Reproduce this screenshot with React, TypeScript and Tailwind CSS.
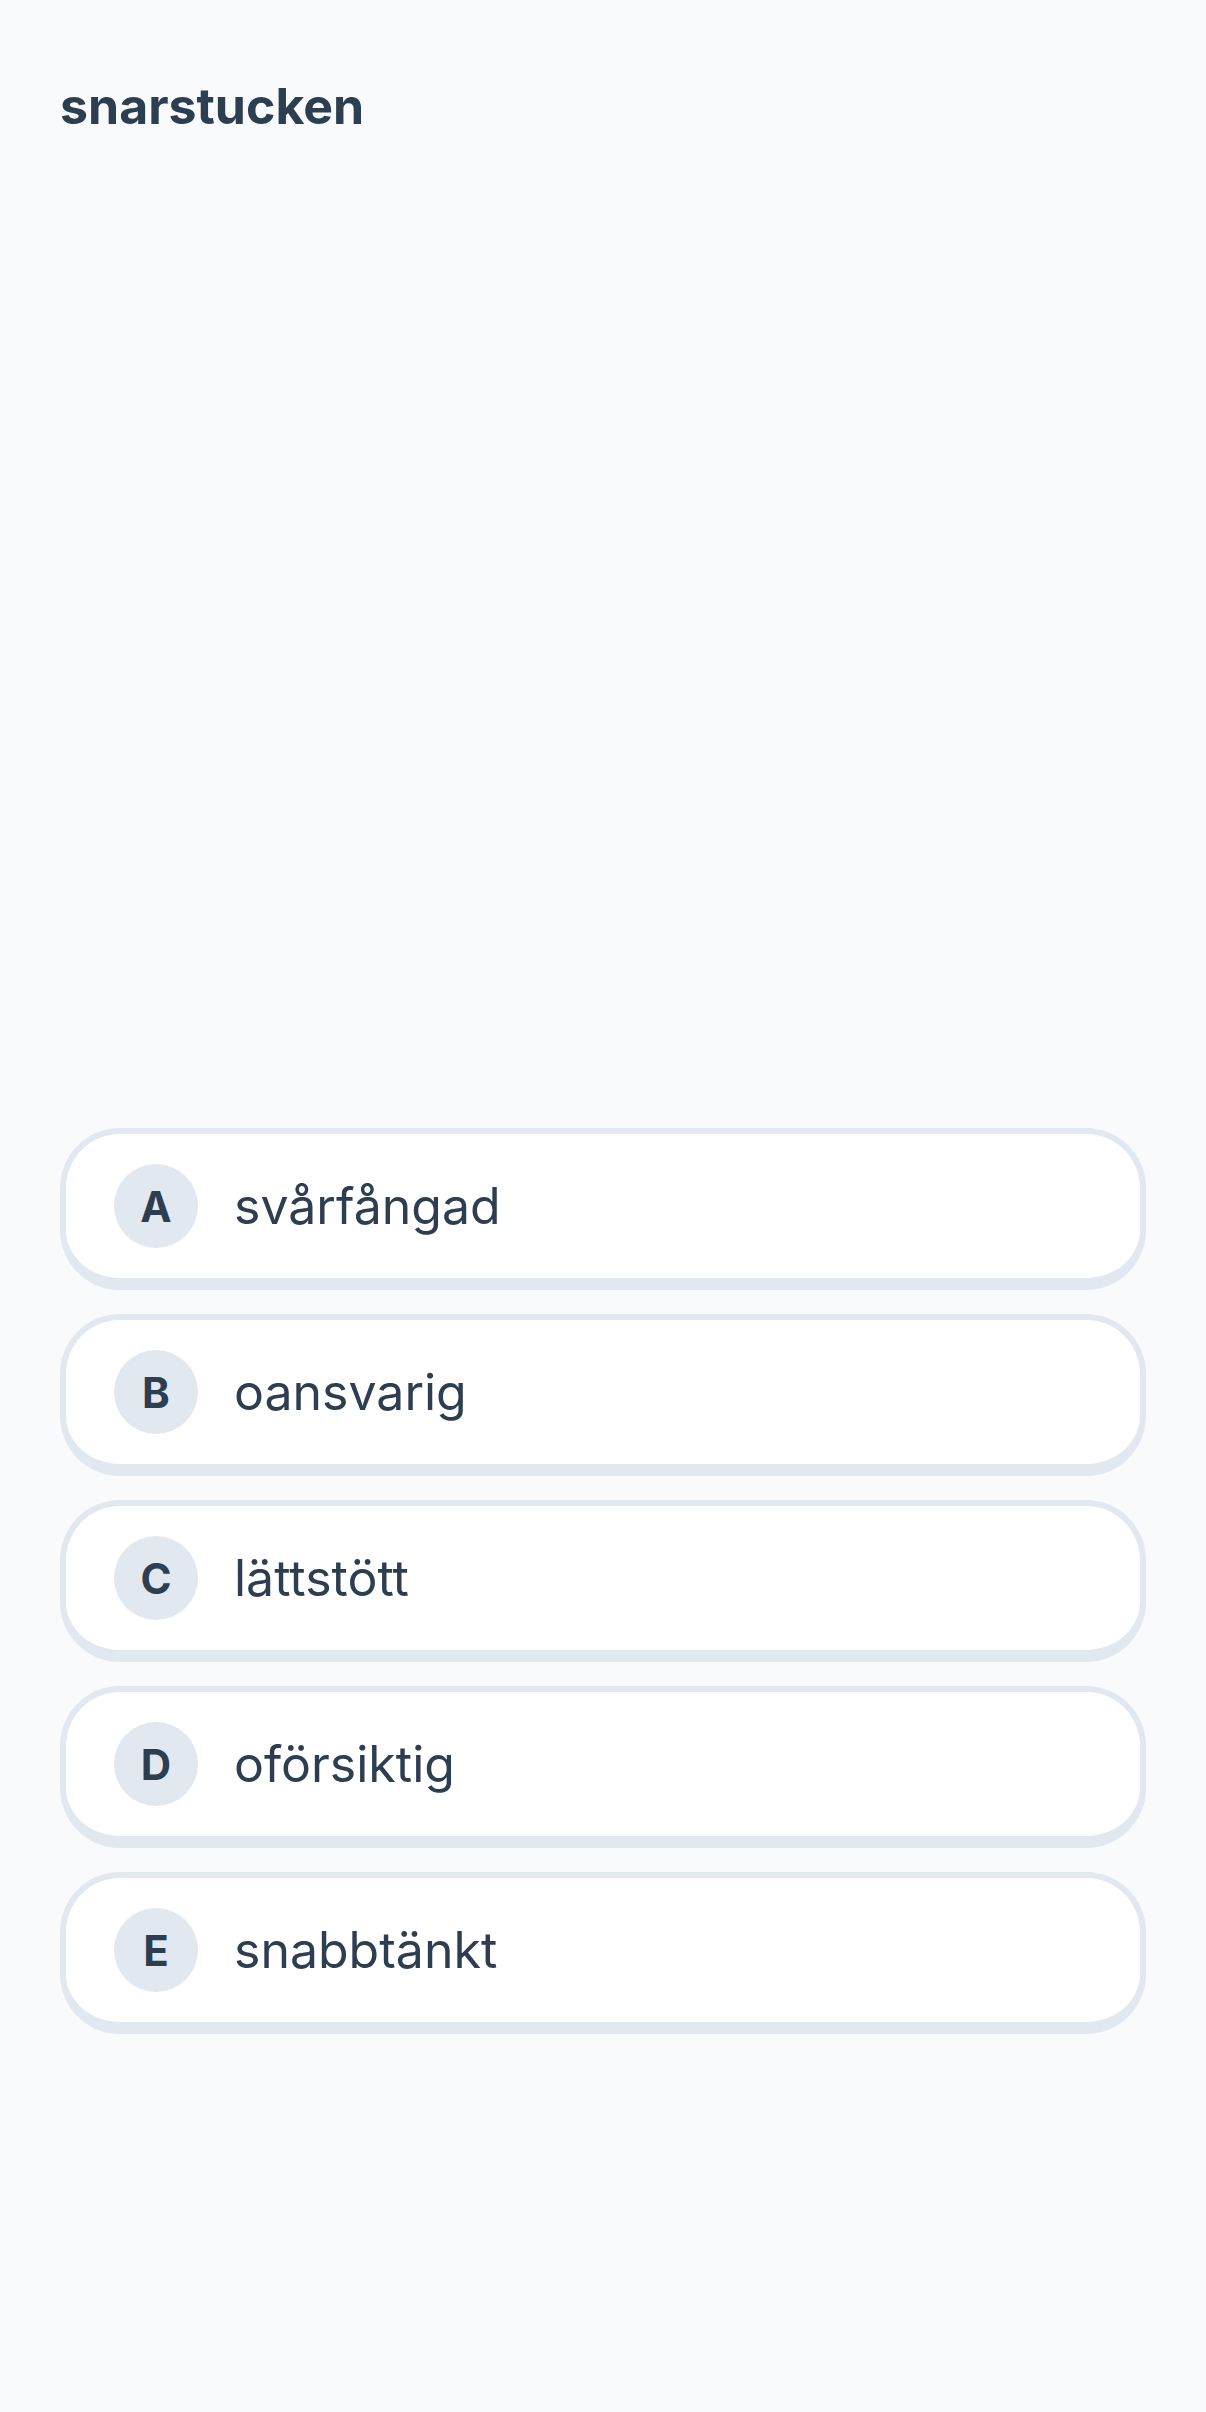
const OPTIONS = [
  { key: "A", label: "svårfångad" },
  { key: "B", label: "oansvarig" },
  { key: "C", label: "lättstött" },
  { key: "D", label: "oförsiktig" },
  { key: "E", label: "snabbtänkt" },
];

function OptionCard({ letter, label }: { letter: string; label: string }) {
  return (
    <button className="flex h-[162px] w-full items-center rounded-[60px] border-[6px] border-b-[12px] border-[#e2e8f0] bg-white px-[48px] text-left">
      <span className="flex h-[84px] w-[84px] shrink-0 items-center justify-center rounded-full bg-[#e2e8f0] text-[42px] font-bold text-[#2c3e50]">
        {letter}
      </span>
      <span className="ml-[36px] text-[50px] text-[#2c3e50]">{label}</span>
    </button>
  );
}

export default function App() {
  return (
    <div
      className="flex min-h-screen w-full flex-col bg-[#f8fafc] px-[60px] [font-variant-ligatures:none]"
      style={{ fontFamily: "Inter, Lato, sans-serif" }}
    >
      <header className="pt-[76px]">
        <h1 className="text-[50px] font-bold leading-[60px] text-[#2c3e50]">
          snarstucken
        </h1>
      </header>
      <div className="h-[992px]" />
      <div className="flex flex-col gap-[24px]">
        {OPTIONS.map((o) => (
          <OptionCard key={o.key} letter={o.key} label={o.label} />
        ))}
      </div>
    </div>
  );
}
